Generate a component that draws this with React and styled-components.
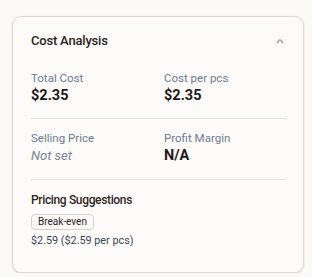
import React from "react";
import styled, { createGlobalStyle } from "styled-components";

const Global = createGlobalStyle`
  html, body { margin: 0; padding: 0; background: #fcfaf6; }
  body { font-family: Roboto, "Noto Sans", sans-serif; -webkit-font-smoothing: antialiased; }
`;

const Page = styled.div`
  padding: 16px 8px 0 12px;
  width: 312px;
  box-sizing: border-box;
`;

const Card = styled.section`
  background: #fdfbfa;
  border: 1px solid #e2d7d1;
  border-radius: 9px;
  box-shadow: 0 1px 2px rgba(120, 90, 80, 0.2);
  padding: 15px 17px 0 18px;
  box-sizing: border-box;
  height: 257px;
`;

const Header = styled.div`
  display: flex;
  align-items: center;
  justify-content: space-between;
  height: 18px;
`;

const Title = styled.h2`
  margin: 0;
  font-size: 13px;
  line-height: 18px;
  font-weight: 500;
  letter-spacing: -0.2px;
  color: #2a2320;
`;

const Chevron = styled.svg`
  width: 10px;
  height: 10px;
  margin-right: 1px;
`;

const Grid = styled.div`
  display: grid;
  grid-template-columns: 133px 1fr;
  padding: ${(p) => p.$pad};
  border-bottom: ${(p) => (p.$divider ? "1px solid #e7e3e1" : "none")};
`;

const Stat = styled.div`
  display: flex;
  flex-direction: column;
  gap: 2px;
`;

const Label = styled.span`
  font-size: 11.5px;
  color: #6d7b8c;
  line-height: 14px;
`;

const Value = styled.span`
  font-size: 14.5px;
  font-weight: 700;
  color: #1f1a18;
  line-height: 18px;
  ${(p) => p.$muted && `
    font-style: italic;
    font-weight: 400;
    color: #7a8594;
    font-size: 13px;
  `}
`;

const Suggestions = styled.div`
  padding-top: 12px;
  display: flex;
  flex-direction: column;
  align-items: flex-start;
`;

const SubTitle = styled.h3`
  margin: 0;
  font-size: 12px;
  font-weight: 500;
  letter-spacing: -0.35px;
  color: #2e2724;
  line-height: 16px;
`;

const Badge = styled.span`
  margin-top: 6px;
  border: 1px solid #dccfca;
  border-radius: 4px;
  padding: 0 6px;
  font-size: 10px;
  line-height: 14px;
  color: #2a2320;
  background: #fdfbfa;
`;

const Price = styled.span`
  margin-top: 4px;
  font-size: 10.8px;
  color: #3b4654;
  line-height: 14px;
`;

export default function App() {
  return (
    <>
      <Global />
      <Page>
        <Card>
          <Header>
            <Title>Cost Analysis</Title>
            <Chevron viewBox="0 0 10 10" fill="none">
              <path d="M2.2 6.5 L5 3.6 L7.8 6.5" stroke="#a0948f" strokeWidth="1.2" strokeLinecap="round" strokeLinejoin="round" />
            </Chevron>
          </Header>
          <Grid $pad="21px 0 13px" $divider>
            <Stat>
              <Label>Total Cost</Label>
              <Value>$2.35</Value>
            </Stat>
            <Stat>
              <Label>Cost per pcs</Label>
              <Value>$2.35</Value>
            </Stat>
          </Grid>
          <Grid $pad="12px 0 14px" $divider>
            <Stat>
              <Label>Selling Price</Label>
              <Value $muted>Not set</Value>
            </Stat>
            <Stat>
              <Label>Profit Margin</Label>
              <Value>N/A</Value>
            </Stat>
          </Grid>
          <Suggestions>
            <SubTitle>Pricing Suggestions</SubTitle>
            <Badge>Break-even</Badge>
            <Price>$2.59 ($2.59 per pcs)</Price>
          </Suggestions>
        </Card>
      </Page>
    </>
  );
}
